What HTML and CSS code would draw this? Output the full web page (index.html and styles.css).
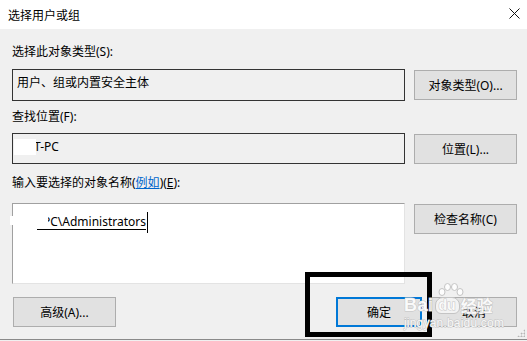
FILE: index.html
```html
<!DOCTYPE html>
<html lang="zh-CN">
<head>
    <meta charset="UTF-8">
    <title>选择用户或组</title>
    <link rel="stylesheet" href="styles.css">
</head>
<body>
    <div class="dialog">
        <div class="titlebar">
            <span class="title">选择用户或组</span>
            <svg class="close" width="11" height="11" viewBox="0 0 11 11"><path d="M0.5 0.5 L10.5 10.5 M10.5 0.5 L0.5 10.5" stroke="#111" stroke-width="1" fill="none"/></svg>
        </div>
        <div class="content">
            <div class="field-label first">选择此对象类型(S):</div>
            <div class="row">
                <div class="box">用户、组或内置安全主体</div>
                <button class="btn">对象类型(O)...</button>
            </div>
            <div class="field-label">查找位置(F):</div>
            <div class="row">
                <div class="box box-loc"><span class="blot"></span>T-PC</div>
                <button class="btn">位置(L)...</button>
            </div>
            <div class="field-label third">输入要选择的对象名称(<a class="link">例如</a>)(<u>E</u>):</div>
            <div class="row">
                <div class="box box-input">
                    <span class="blot-edge"></span>
                    <span class="entry"><span class="mask"></span>PC\Administrators</span><span class="caret"></span>
                </div>
                <button class="btn btn-top">检查名称(C)</button>
            </div>
            <div class="actions">
                <button class="btn btn-adv">高级(A)...</button>
                <div class="spacer"></div>
                <button class="btn btn-ok">确定</button>
                <button class="btn btn-cancel">取消</button>
            </div>
        </div>
        <div class="grip"></div>
    </div>

    <div class="mark-box"></div>
    <div class="watermark">
        <svg class="paw" width="26" height="15" viewBox="0 0 26 15">
            <g fill="rgba(255,255,255,0.85)" stroke="#c4c4c4" stroke-width="1">
                <ellipse cx="4" cy="9" rx="3" ry="3.5"/>
                <ellipse cx="9.5" cy="4" rx="3" ry="3.5"/>
                <ellipse cx="16.5" cy="4" rx="3" ry="3.5"/>
                <ellipse cx="22" cy="9" rx="3" ry="3.5"/>
            </g>
        </svg>
        <div class="mark-line"><span class="mark-bai">Bai</span><span class="mark-du">du</span><span class="mark-cn">经验</span></div>
        <div class="mark-url">jingyan.baidu.com</div>
    </div>
</body>
</html>
```

FILE: styles.css
```css
html, body { margin: 0; padding: 0; }
body { width: 527px; height: 341px; overflow: hidden; background: #f0f0f0; font-family: "Noto Sans", "Noto Sans CJK SC", sans-serif; font-size: 12px; color: #000; }

.dialog { height: 339px; border-bottom: 1px solid #8a8a8a; position: relative; }
.titlebar { height: 29px; background: #fff; display: flex; align-items: center; justify-content: space-between; padding: 0 7px 0 8px; }
.title { font-family: "Noto Sans CJK SC", sans-serif; font-size: 12px; }
.close { margin-top: -2px; }

.content { padding: 0 10px 0 12px; }
.field-label { height: 14px; line-height: 14px; margin-top: 9px; }
.field-label.first { margin-top: 16px; }
.field-label.third { margin-top: 12px; }
.link { color: #0066cc; text-decoration: underline; }

.row { display: grid; grid-template-columns: 393px 103px; column-gap: 9px; align-items: center; margin-top: 9px; }
.field-label.first + .row { margin-top: 10px; }
.field-label.third + .row { margin-top: 13px; }

.box { box-sizing: border-box; height: 32px; border: 1px solid #333; padding: 6px 4px 4px; line-height: 14px; }
.box-loc { height: 31px; }
.blot { display: inline-block; width: 22px; height: 16px; background: #fff; vertical-align: middle; margin: -2px -2px 0 -3px; position: relative; z-index: 1; }

.box-input { height: 81px; background: #fff; border-color: #e3e3e3; border-top-color: #a0a0a0; border-left-color: #a0a0a0; padding: 8px 4px 0 24px; position: relative; }
.blot-edge { position: absolute; left: -3px; top: 12px; width: 30px; height: 9px; background: #fff; }
.entry { display: inline-block; line-height: 14px; border-bottom: 1px solid #000; vertical-align: middle; }
.mask { display: inline-block; width: 11px; height: 14px; background: #fff; vertical-align: top; margin-right: -5px; position: relative; z-index: 1; }
.caret { display: inline-block; width: 1px; height: 21px; background: #000; vertical-align: middle; margin-left: 1px; }

.btn { box-sizing: border-box; height: 30px; background: #e1e1e1; border: 1px solid #adadad; font-family: inherit; font-size: 12px; color: #000; padding: 0; }
.btn-top { align-self: start; margin-top: 1px; }

.actions { display: flex; gap: 9px; margin-top: 13px; }
.btn-adv { width: 103px; margin-left: 1px; }
.spacer { flex: 1; }
.btn-ok { width: 86px; border: 2px solid #0078d7; }
.btn-cancel { width: 86px; }

.grip { position: absolute; right: 2px; bottom: 2px; width: 8px; height: 8px; background: radial-gradient(circle, #b5b5b5 0.8px, transparent 1.2px) 0 0 / 3px 3px; clip-path: polygon(100% 0, 100% 100%, 0 100%); }

.mark-box { position: absolute; left: 305px; top: 272px; width: 117px; height: 55px; border: 5px solid #000; }

.watermark { position: absolute; left: 404px; top: 283px; width: 100px; font-family: "Liberation Sans", sans-serif; }
.paw { display: block; margin-left: 34px; }
.mark-line { display: flex; align-items: center; height: 16px; margin-top: -1px; }
.mark-bai, .mark-du, .mark-cn { color: rgba(255,255,255,0.9); -webkit-text-stroke: 1px #c4c4c4; paint-order: stroke fill; font-weight: bold; }
.mark-bai { font-size: 18px; letter-spacing: 0.5px; }
.mark-du { font-size: 14px; margin-left: 1px; padding: 0 3px; height: 15px; line-height: 15px; border-radius: 8px 8px 6px 6px; background: rgba(255,255,255,0.6); border: 1px solid #c4c4c4; }
.mark-cn { font-family: "Noto Sans CJK SC", sans-serif; font-size: 16px; margin-left: 1px; }
.mark-url { font-size: 12px; color: rgba(255,255,255,0.9); -webkit-text-stroke: 1px #c4c4c4; paint-order: stroke fill; margin-top: 3px; letter-spacing: 0.2px; }
```
